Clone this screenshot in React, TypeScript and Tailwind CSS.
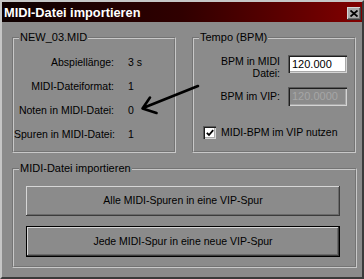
const raised =
  "shadow-[inset_-1px_-1px_#3c3c3c,inset_1px_1px_#d6d6d6,inset_-2px_-2px_#6a6a6a]";
const sunken =
  "shadow-[inset_1px_1px_#5a5a5a,inset_2px_2px_#1e1e1e,inset_-1px_-1px_#d4d4d4,inset_-2px_-2px_#a8a8a8]";

const GroupBox = ({
  label,
  className,
  children,
}: {
  label: string;
  className: string;
  children: React.ReactNode;
}) => (
  <fieldset
    className={`border-2 [border-style:groove] border-[#c8c8c8] ${className}`}
  >
    <legend className="ml-[5px] px-[1px] leading-[13px] text-[11px]">{label}</legend>
    {children}
  </fieldset>
);

const InfoRow = ({ label, value }: { label: string; value: string }) => (
  <div className="flex items-center h-[24px] whitespace-nowrap">
    <span className="w-[100px] shrink-0 text-right">{label}</span>
    <span className="pl-[14px]">{value}</span>
  </div>
);

export default function App() {
  return (
    <div className="relative w-[364px] h-[279px] font-['Liberation_Sans',Arial,sans-serif] text-[10.5px] text-black">
      <div className="w-full h-full bg-[#8b8b8b] border-2 border-t-[#c6c6c6] border-l-[#c6c6c6] border-r-[#3a3a3a] border-b-[#3a3a3a]">
        {/* Title bar */}
        <div className="h-[20px] flex items-center justify-between pl-[2px] pr-[1px] bg-gradient-to-r from-[#0e0000] via-[#300000] to-[#820000]">
          <span className="text-white font-bold text-[12.8px] pt-[1px]">MIDI-Datei importieren</span>
          <button
            className={`w-[14px] h-[13px] mt-[3px] bg-[#a9a9a9] flex items-center justify-center ${raised}`}
          >
            <svg width="8" height="7" viewBox="0 0 8 7">
              <path d="M0.5 0.5 L7.5 6.5 M7.5 0.5 L0.5 6.5" stroke="#000" strokeWidth="1.8" />
            </svg>
          </button>
        </div>

        <div className="pl-[10px] pt-[9px]">
          <div className="flex gap-[16px]">
            {/* File info */}
            <GroupBox label="NEW_03.MID" className="w-[164px] h-[122px]">
              <div className="pt-[7px]">
                <InfoRow label="Abspiellänge:" value="3 s" />
                <InfoRow label="MIDI-Dateiformat:" value="1" />
                <InfoRow label="Noten in MIDI-Datei:" value="0" />
                <InfoRow label="Spuren in MIDI-Datei:" value="1" />
              </div>
            </GroupBox>

            {/* Tempo */}
            <GroupBox label="Tempo (BPM)" className="w-[164px] h-[122px]">
              <div className="pt-[11px] whitespace-nowrap">
                <div className="flex items-start h-[24px]">
                  <span className="w-[86px] shrink-0 text-right leading-[11.5px] pt-[1px]">
                    BPM in MIDI
                    <br />
                    Datei:
                  </span>
                  <div
                    className={`ml-[8px] w-[59px] h-[18px] bg-white flex items-center pl-[4px] text-[11px] ${sunken}`}
                  >
                    120.000
                  </div>
                </div>
                <div className="flex items-center h-[19px] mt-[8px]">
                  <span className="w-[86px] shrink-0 text-right">BPM im VIP:</span>
                  <div
                    className={`ml-[8px] w-[59px] h-[19px] bg-[#8b8b8b] flex items-center pl-[4px] text-[11px] text-[#a6a6a6] ${sunken}`}
                  >
                    120.0000
                  </div>
                </div>
                <div className="flex items-center mt-[19px] pl-[9px] gap-[5px]">
                  <div
                    className={`w-[13px] h-[13px] bg-white flex items-center justify-center ${sunken}`}
                  >
                    <svg width="8" height="8" viewBox="0 0 8 8">
                      <path d="M0.8 3.8 L3 6 L7.2 1.2" fill="none" stroke="#000" strokeWidth="1.8" />
                    </svg>
                  </div>
                  <span>MIDI-BPM im VIP nutzen</span>
                </div>
              </div>
            </GroupBox>
          </div>

          {/* Import */}
          <GroupBox label="MIDI-Datei importieren" className="mt-[9px] w-[345px] h-[106px]">
            <div className="px-[12px] pt-[11px] flex flex-col gap-[10px]">
              <button className={`w-[314px] h-[30px] bg-[#8b8b8b] ${raised}`}>
                Alle MIDI-Spuren in eine VIP-Spur
              </button>
              <button
                className={`w-[314px] h-[31px] bg-[#8b8b8b] border border-black ${raised}`}
              >
                Jede MIDI-Spur in eine neue VIP-Spur
              </button>
            </div>
          </GroupBox>
        </div>
      </div>

      {/* Annotation arrow */}
      <svg
        className="absolute left-0 top-0 pointer-events-none"
        width="364"
        height="279"
        viewBox="0 0 364 279"
      >
        <path
          d="M198 86 L143 108 M150 97.5 L142.5 108.5 L156.5 113"
          fill="none"
          stroke="#000"
          strokeWidth="2.6"
          strokeLinecap="round"
          strokeLinejoin="round"
        />
      </svg>
    </div>
  );
}
